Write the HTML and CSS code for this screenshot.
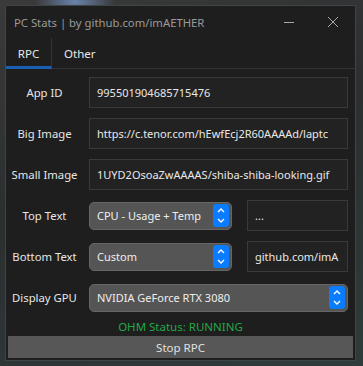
FILE: index.html
```html
<!DOCTYPE html>
<html lang="en">
<head>
    <meta charset="UTF-8">
    <meta name="viewport" content="width=device-width, initial-scale=1.0">
    <title>PC Stats</title>
    <link rel="stylesheet" href="styles.css">
</head>
<body>

<div class="window">
    <div class="titlebar">
        <span class="title">PC Stats | by github.com/imAETHER</span>
        <span class="win-btn">
            <svg width="12" height="12" viewBox="0 0 12 12"><path d="M1 6.5h10" stroke="#a8a8a8" stroke-width="1"/></svg>
        </span>
        <span class="win-btn">
            <svg width="12" height="12" viewBox="0 0 12 12"><path d="M1 1l10 10M11 1L1 11" stroke="#a8a8a8" stroke-width="1"/></svg>
        </span>
    </div>

    <div class="tabs">
        <div class="tab active">RPC</div>
        <div class="tab">Other</div>
    </div>

    <div class="form">
        <label>App ID</label>
        <div class="field wide">995501904685715476</div>

        <label>Big Image</label>
        <div class="field wide">https://c.tenor.com/hEwfEcj2R60AAAAd/laptc</div>

        <label>Small Image</label>
        <div class="field wide">1UYD2OsoaZwAAAAS/shiba-shiba-looking.gif</div>

        <label>Top Text</label>
        <div class="pair">
            <div class="combo">
                <span>CPU - Usage + Temp</span>
                <span class="spin"><svg width="16" height="23" viewBox="0 0 16 23"><path d="M5 8l3-3 3 3M5 15l3 3 3-3" fill="none" stroke="#fff" stroke-width="1.4"/></svg></span>
            </div>
            <div class="field">...</div>
        </div>

        <label>Bottom Text</label>
        <div class="pair">
            <div class="combo">
                <span>Custom</span>
                <span class="spin"><svg width="16" height="23" viewBox="0 0 16 23"><path d="M5 8l3-3 3 3M5 15l3 3 3-3" fill="none" stroke="#fff" stroke-width="1.4"/></svg></span>
            </div>
            <div class="field">github.com/imA</div>
        </div>

        <label>Display GPU</label>
        <div class="combo">
            <span>NVIDIA GeForce RTX 3080</span>
            <span class="spin"><svg width="16" height="23" viewBox="0 0 16 23"><path d="M5 8l3-3 3 3M5 15l3 3 3-3" fill="none" stroke="#fff" stroke-width="1.4"/></svg></span>
        </div>
    </div>

    <div class="status">OHM Status: RUNNING</div>
    <button class="stop">Stop RPC</button>
</div>

</body>
</html>
```

FILE: styles.css
```css
body {
    margin: 0;
    height: 366px;
    overflow: hidden;
    font-family: 'Noto Sans', sans-serif;
    background:
        radial-gradient(ellipse 40px 18px at 75px 2px, rgba(120, 150, 200, 0.8), transparent),
        linear-gradient(160deg, #3a3a3a 0%, #2b2f30 45%, #2f3b3b 100%);
}

.window {
    margin: 5px 0 0 5px;
    width: 349px;
    height: 354px;
    background-color: #1e1e1e;
    border: 1px solid #3f4444;
    display: flex;
    flex-direction: column;
}

.titlebar {
    height: 32px;
    display: flex;
    align-items: center;
    padding-left: 8px;
}

.title {
    flex: 1;
    font-size: 11.3px;
    color: #9a9a9a;
}

.win-btn {
    width: 44px;
    display: flex;
    justify-content: center;
}

.tabs {
    height: 30px;
    display: flex;
    border-bottom: 1px solid #333;
}

.tab {
    font-size: 11.5px;
    color: #e8e8e8;
    padding: 0 12px;
    display: flex;
    align-items: center;
    border-bottom: 3px solid transparent;
    margin-bottom: -1px;
    padding-top: 2px;
}

.tab.active {
    width: 45px;
    padding: 2px 0 0;
    justify-content: center;
    border-right: 1px solid #333;
    border-bottom-color: #1a5fb4;
}

.form {
    margin-top: 8px;
    padding-right: 7px;
    display: grid;
    grid-template-columns: 77px 1fr;
    grid-auto-rows: 31px;
    column-gap: 6px;
    row-gap: 10px;
    align-items: center;
}

label {
    text-align: center;
    font-size: 11.3px;
    color: #e6e6e6;
}

.field {
    box-sizing: border-box;
    height: 31px;
    padding: 0 7px;
    background-color: #222;
    border: 1px solid #3a3a3a;
    font-size: 11px;
    color: #e8e8e8;
    display: flex;
    align-items: center;
    white-space: nowrap;
    overflow: hidden;
}

.pair {
    display: grid;
    grid-template-columns: 143px 1fr;
    column-gap: 15px;
    align-items: center;
}

.combo {
    box-sizing: border-box;
    height: 28px;
    padding: 0 2px 0 7px;
    background-color: #555;
    border: 1px solid #666;
    border-radius: 5px;
    font-size: 11px;
    color: #eee;
    display: flex;
    align-items: center;
    justify-content: space-between;
    white-space: nowrap;
}

.spin {
    width: 16px;
    height: 23px;
    background-color: #0a7cff;
    border-radius: 3px;
    display: flex;
}

.status {
    margin-top: 5px;
    line-height: 18px;
    text-align: center;
    font-size: 11.5px;
    color: #22a846;
}

.stop {
    margin: 0 2px;
    height: 22px;
    border: none;
    background-color: #575757;
    color: #e0e0e0;
    font-family: inherit;
    font-size: 11.5px;
    padding: 0;
}
```
